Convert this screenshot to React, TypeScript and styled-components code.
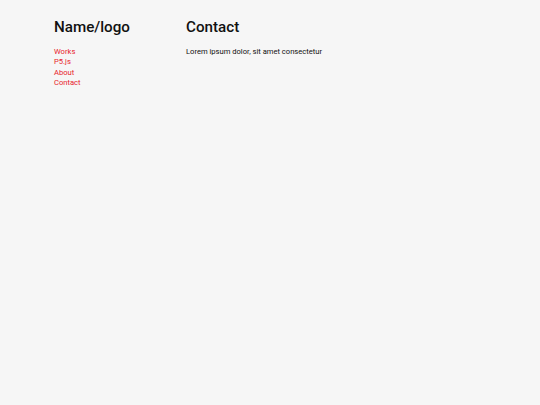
import React from "react";
import styled, { createGlobalStyle } from "styled-components";

const Global = createGlobalStyle`
  html, body { margin: 0; padding: 0; background: #f6f6f6; }
  body { font-family: Roboto, "Liberation Sans", sans-serif; color: #111; }
`;

const Page = styled.div`
  display: flex;
  padding: 18px 54px;
`;

const Side = styled.aside`
  width: 132px;
  flex-shrink: 0;
`;

const Main = styled.main`
  flex: 1;
`;

const Title = styled.h1`
  margin: 0 0 10px;
  font-size: 15.2px;
  font-weight: 500;
  line-height: 19px;
`;

const Nav = styled.nav`
  display: flex;
  flex-direction: column;
`;

const NavLink = styled.a`
  color: #e8222a;
  text-decoration: none;
  font-size: 7.6px;
  line-height: 10.3px;
`;

const Text = styled.p`
  margin: 0;
  font-size: 7.6px;
  line-height: 10.3px;
`;

export default function App() {
  return (
    <>
      <Global />
      <Page>
        <Side>
          <Title>Name/logo</Title>
          <Nav>
            <NavLink href="#">Works</NavLink>
            <NavLink href="#">P5.js</NavLink>
            <NavLink href="#">About</NavLink>
            <NavLink href="#">Contact</NavLink>
          </Nav>
        </Side>
        <Main>
          <Title>Contact</Title>
          <Text>Lorem ipsum dolor, sit amet consectetur</Text>
        </Main>
      </Page>
    </>
  );
}
